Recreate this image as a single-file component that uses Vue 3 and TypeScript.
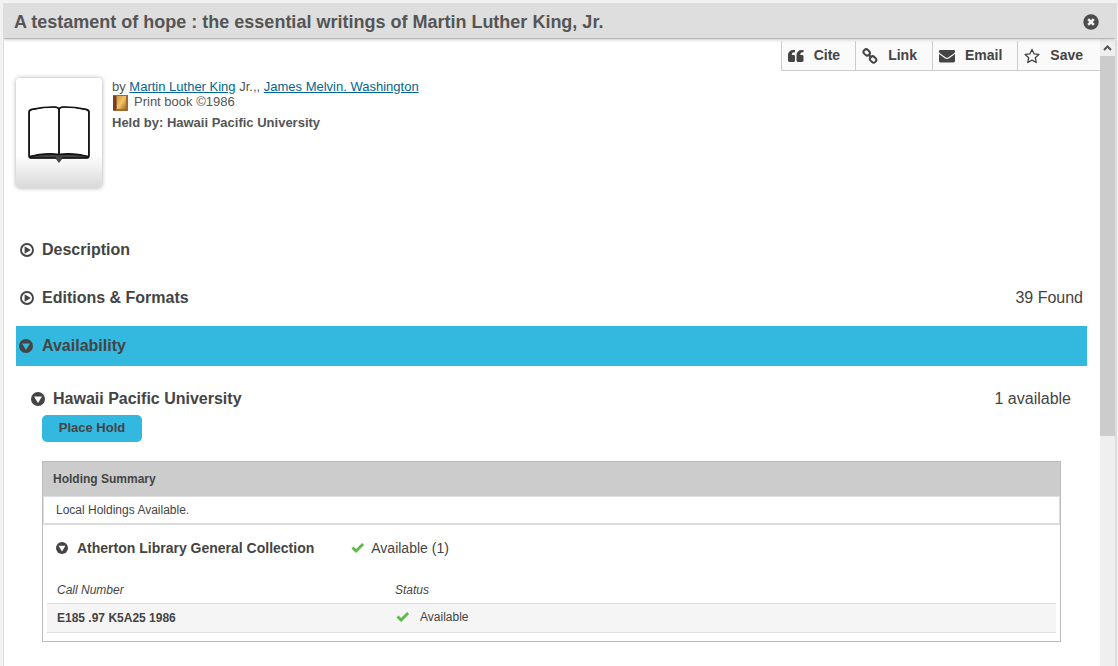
<script setup lang="ts">
import { ref } from 'vue'

interface Holding {
  callNumber: string
  status: string
}

const actions = ['Cite', 'Link', 'Email', 'Save'] as const
const holdings: Holding[] = [{ callNumber: 'E185 .97 K5A25 1986', status: 'Available' }]

const descriptionOpen = ref(false)
const editionsOpen = ref(false)
const availabilityOpen = ref(true)
const libraryOpen = ref(true)
const collectionOpen = ref(true)
</script>

<template>
  <div class="dialog" role="dialog" aria-labelledby="record-title">
    <header class="titlebar">
      <h1 id="record-title">A testament of hope : the essential writings of Martin Luther King, Jr.</h1>
      <button type="button" class="close" aria-label="Close">
        <svg width="16" height="16" viewBox="0 0 16 16">
          <circle cx="8" cy="8" r="7.7" fill="#4c4c4c" />
          <path d="M5.2 5.2l5.6 5.6M10.8 5.2l-5.6 5.6" stroke="#f4f4f4" stroke-width="2.6" />
        </svg>
      </button>
    </header>

    <div class="body">
      <main class="content">
        <nav class="toolbar" aria-label="Record actions">
          <button v-for="action in actions" :key="action" type="button" class="action">
            <svg v-if="action === 'Cite'" width="16" height="16" viewBox="0 0 16 16" fill="#444">
              <path d="M7 2v2.2H6A2.2 2.2 0 0 0 3.8 6.4V7h1.8A1.4 1.4 0 0 1 7 8.4v4.2A1.4 1.4 0 0 1 5.6 14H1.4A1.4 1.4 0 0 1 0 12.6V7A5 5 0 0 1 5 2z" />
              <path d="M15.5 2v2.2h-1A2.2 2.2 0 0 0 12.3 6.4V7h1.8a1.4 1.4 0 0 1 1.4 1.4v4.2a1.4 1.4 0 0 1-1.4 1.4H9.9a1.4 1.4 0 0 1-1.4-1.4V7a5 5 0 0 1 5-5z" />
            </svg>
            <svg v-else-if="action === 'Link'" width="16" height="16" viewBox="0 0 16 16" fill="none" stroke="#444" stroke-width="2">
              <rect x="1.4" y="1.8" width="6.6" height="5.2" rx="2.4" transform="rotate(45 4.7 4.4)" />
              <rect x="7.8" y="8.8" width="6.6" height="5.2" rx="2.4" transform="rotate(45 11.1 11.4)" />
              <path d="M6.2 6.2l3.4 3.6" />
            </svg>
            <svg v-else-if="action === 'Email'" width="16" height="16" viewBox="0 0 16 16" fill="#444">
              <path d="M0 3.4A1.2 1.2 0 0 1 1.2 2h13.6A1.2 1.2 0 0 1 16 3.400c0 .9-.5 1.5-1.2 2L9.5 9.2q-1.5 1-3 0L1.2 5.400C.5 4.900 0 4.300 0 3.400z" />
              <path d="M0 6.100l5.800 4.200q2.200 1.500 4.400 0L16 6.100V13a1.400 1.400 0 0 1-1.400 1.400H1.400A1.400 1.400 0 0 1 0 13z" />
            </svg>
            <svg v-else width="16" height="16" viewBox="0 0 16 16" fill="none" stroke="#444" stroke-width="1.3" stroke-linejoin="round">
              <path d="M8 1.400l2 4.400 4.900.6-3.600 3.300.9 4.800L8 12.100l-4.200 2.400.9-4.800L1.100 6.400l4.900-.6z" />
            </svg>
            <span>{{ action }}</span>
          </button>
        </nav>

        <section class="record">
          <div class="cover">
            <svg width="64" height="58" viewBox="0 0 64 58" role="img" aria-label="Book cover">
              <path d="M2 51V7q0-2.500 3-3Q17 1.500 28 1.500q4 0 4 2.500 0-2.500 4-2.500Q47 1.500 59 4q3 .5 3 3v44q0 2.500-3 2.500H35.500L32 58l-3.500-4.500H5q-3 0-3-2.500z" fill="#444" />
              <path d="M3 51V7q0-1.700 2-2.100Q17 2.500 27.500 2.500 31.200 2.500 31.200 5v44Q17 47.500 3 51z" fill="#fff" />
              <path d="M61 51V7q0-1.700-2-2.100Q47 2.500 36.500 2.500 32.800 2.500 32.800 5v44Q47 47.500 61 51z" fill="#fff" />
              <path d="M3 51.500Q17 47.500 32 49.500 47 47.500 61 51.500M32 50V4.500M32 4.500Q31.500 2 27 2 16 2 5 4.300 2 5 2 7v43.500Q2 53 4.500 53H29M32 4.500Q32.500 2 37 2q11 0 22 2.300 3 .7 3 2.700v43.500Q62 53 59.500 53H35" fill="none" stroke="#111" stroke-width="1.700" />
            </svg>
          </div>
          <div class="details">
            <p>by <a href="#king">Martin Luther King</a> Jr.,, <a href="#washington">James Melvin. Washington</a></p>
            <p class="format">
              <svg width="16" height="16" viewBox="0 0 16 16" aria-hidden="true">
                <defs>
                  <linearGradient id="leather" x1="0" y1="0" x2="1" y2="1">
                    <stop offset="0" stop-color="#d39a3a" />
                    <stop offset=".5" stop-color="#efc468" />
                    <stop offset="1" stop-color="#aa6a20" />
                  </linearGradient>
                </defs>
                <rect x="1" width="15" height="16" fill="#9c6a32" />
                <rect x="1" y="1" width="3" height="14" fill="#7b3e24" />
                <rect x="5" y="1" width="9" height="13" fill="url(#leather)" />
              </svg>
              <span>Print book ©1986</span>
            </p>
            <p class="held">Held by: Hawaii Pacific University</p>
          </div>
        </section>

        <div class="sections">
          <h2 class="bar">
            <button type="button" class="toggle" :aria-expanded="descriptionOpen" @click="descriptionOpen = !descriptionOpen">
              <svg width="14" height="14" viewBox="0 0 14 14"><circle cx="7" cy="7" r="6" fill="none" stroke="#444" stroke-width="1.9" /><path d="M4.600 3.200L10.800 7 4.600 10.800z" fill="#444" /></svg>
              Description
            </button>
          </h2>
          <h2 class="bar">
            <button type="button" class="toggle" :aria-expanded="editionsOpen" @click="editionsOpen = !editionsOpen">
              <svg width="14" height="14" viewBox="0 0 14 14"><circle cx="7" cy="7" r="6" fill="none" stroke="#444" stroke-width="1.9" /><path d="M4.600 3.200L10.800 7 4.600 10.800z" fill="#444" /></svg>
              Editions &amp; Formats
            </button>
            <span class="count">39 Found</span>
          </h2>
          <h2 class="bar active">
            <button type="button" class="toggle" :aria-expanded="availabilityOpen" @click="availabilityOpen = !availabilityOpen">
              <svg width="14" height="14" viewBox="0 0 14 14"><circle cx="7" cy="7" r="7" fill="#444" /><path d="M3 4.400h8L7 11z" fill="#33b8e0" /></svg>
              Availability
            </button>
          </h2>

          <div v-if="availabilityOpen" class="availability">
            <h3 class="library">
              <button type="button" class="toggle" :aria-expanded="libraryOpen" @click="libraryOpen = !libraryOpen">
                <svg width="14" height="14" viewBox="0 0 14 14"><circle cx="7" cy="7" r="7" fill="#444" /><path d="M3 4.400h8L7 11z" fill="#fff" /></svg>
                Hawaii Pacific University
              </button>
              <span class="count">1 available</span>
            </h3>

            <template v-if="libraryOpen">
              <button type="button" class="hold">Place Hold</button>

              <section class="summary">
                <h4 class="summary-title">Holding Summary</h4>
                <p class="local">Local Holdings Available.</p>
                <div class="collection">
                  <h5>
                    <button type="button" class="toggle small" :aria-expanded="collectionOpen" @click="collectionOpen = !collectionOpen">
                      <svg width="12" height="12" viewBox="0 0 14 14"><circle cx="7" cy="7" r="7" fill="#444" /><path d="M3 4.400h8L7 11z" fill="#fff" /></svg>
                      Atherton Library General Collection
                    </button>
                  </h5>
                  <span class="available">
                    <svg width="14" height="12" viewBox="0 0 14 12"><path d="M1.500 5.500l3.600 3.600 7-7" fill="none" stroke="#5cb946" stroke-width="2.800" /></svg>
                    Available (1)
                  </span>
                </div>
                <table v-if="collectionOpen">
                  <thead>
                    <tr><th scope="col" class="call">Call Number</th><th scope="col">Status</th></tr>
                  </thead>
                  <tbody>
                    <tr v-for="holding in holdings" :key="holding.callNumber">
                      <th scope="row">{{ holding.callNumber }}</th>
                      <td>
                        <span class="status">
                          <svg width="14" height="12" viewBox="0 0 14 12"><path d="M1.500 5.500l3.600 3.600 7-7" fill="none" stroke="#5cb946" stroke-width="2.800" /></svg>
                          {{ holding.status }}
                        </span>
                      </td>
                    </tr>
                  </tbody>
                </table>
              </section>
            </template>
          </div>
        </div>
      </main>

      <div class="scrollbar" aria-hidden="true">
        <svg width="15" height="17" viewBox="0 0 15 17"><path d="M4 11l3.500-3.500L11 11" fill="none" stroke="#555" stroke-width="2" /></svg>
        <div class="thumb"></div>
      </div>
    </div>
  </div>
</template>

<style>
body {
  background: #f2f2f2;
}
</style>

<style scoped>
.dialog {
  box-sizing: border-box;
  display: flex;
  flex-direction: column;
  height: calc(100vh - 3px);
  margin: 3px 1px 0 3px;
  border: solid #ddd;
  border-width: 0 2px 0 1px;
  overflow: hidden;
  background: #fff;
  color: #444;
  font: 13px/15px "Liberation Sans", Arial, sans-serif;
}
h1, h2, h3, h4, h5, p {
  margin: 0;
  font-size: inherit;
}
svg {
  flex: none;
}
button {
  margin: 0;
  padding: 0;
  border: 0;
  background: none;
  color: inherit;
  font: inherit;
  cursor: pointer;
}
.titlebar {
  box-sizing: border-box;
  display: flex;
  align-items: center;
  justify-content: space-between;
  flex: none;
  height: 36px;
  padding: 2px 16px 0 10px;
  border-bottom: 1px solid #b8b8b8;
  background: #dedede;
  box-shadow: 0 1px 3px #ccc;
  color: #555;
  z-index: 1;
}
h1 {
  font-size: 18px;
  line-height: 24px;
}
.close {
  display: flex;
  padding-top: 1px;
}
.body {
  display: flex;
  flex: 1;
  min-height: 0;
}
.content {
  flex: 1;
  min-width: 0;
  padding-top: 2px;
  overflow: hidden;
}
.toolbar {
  display: flex;
  justify-content: flex-end;
}
.action {
  display: flex;
  align-items: center;
  gap: 10px;
  height: 30px;
  padding: 0 15px 0 6px;
  border: solid #ccc;
  border-width: 0 0 1px 1px;
  background: #fafafa;
  font-weight: bold;
  font-size: 14px;
}
.action:last-child {
  padding-right: 17px;
}
.record {
  display: flex;
  gap: 10px;
  padding: 7px 13px 42px 12px;
}
.cover {
  display: flex;
  flex: none;
  justify-content: center;
  box-sizing: border-box;
  width: 86px;
  height: 110px;
  padding-top: 27px;
  border-radius: 4px;
  background: linear-gradient(#fff 70%, #d8d8d8);
  box-shadow: 0 0 4px #aaa;
}
.details {
  padding-top: 1px;
  color: #555;
}
.details a {
  color: #00678f;
}
.format {
  display: flex;
  align-items: flex-start;
  gap: 6px;
  height: 16px;
}
.format svg {
  margin-top: 1px;
}
.held {
  padding-top: 5px;
  font-weight: bold;
}
.sections {
  display: flex;
  flex-direction: column;
  gap: 8px;
  padding: 0 13px 0 12px;
  font-size: 16px;
  line-height: 20px;
}
.bar {
  display: flex;
  align-items: center;
  justify-content: space-between;
  height: 40px;
  padding: 0 4px;
}
.bar.active {
  padding: 0 3px;
  background: #33b8e0;
}
.toggle {
  display: flex;
  align-items: center;
  gap: 8px;
  font-weight: bold;
}
.active .toggle {
  gap: 9px;
}
.toggle.small {
  gap: 9px;
}
.count {
  font-weight: normal;
}
.availability {
  padding: 15px 26px 0;
}
.library {
  display: flex;
  justify-content: space-between;
  margin: 0 -10px 6px -11px;
}
.hold {
  display: block;
  width: 100px;
  height: 27px;
  margin-bottom: 19px;
  padding-bottom: 2px;
  border-radius: 5px;
  background: #33b8e0;
  font-weight: bold;
  font-size: 13px;
}
.summary {
  padding-bottom: 8px;
  border: 1px solid #bbb;
  font-size: 12px;
}
.summary-title {
  padding: 0 10px;
  background: #ccc;
  line-height: 34px;
}
.local {
  padding: 0 12px;
  border: 1px solid #ddd;
  border-bottom-width: 2px;
  line-height: 26px;
}
.collection {
  display: flex;
  align-items: center;
  gap: 37px;
  height: 46px;
  padding-left: 13px;
  font-size: 14px;
}
.available {
  display: flex;
  align-items: center;
  gap: 6px;
}
table {
  width: calc(100% - 8px);
  margin: 0 4px;
  border-collapse: separate;
  border-spacing: 0;
  text-align: left;
}
th, td {
  padding: 0 10px;
}
thead th {
  padding-top: 6px;
  font-weight: normal;
  font-style: italic;
  line-height: 26px;
}
.call {
  width: 318px;
}
tbody th, tbody td {
  height: 28px;
  border: solid #ddd;
  border-width: 1px 0;
  background: #f5f5f5;
}
.status {
  display: flex;
  align-items: center;
  gap: 10px;
  padding: 0 0 2px 1px;
}
.scrollbar {
  display: flex;
  flex: none;
  flex-direction: column;
  width: 15px;
  background: #efefef;
}
.thumb {
  height: 380px;
  background: #ccc;
}
</style>
